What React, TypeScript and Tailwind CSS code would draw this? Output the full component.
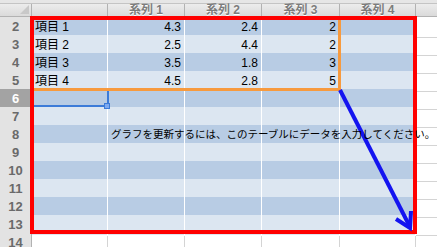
import React from "react";

const DARK = "bg-[#b8cce4]";
const LIGHT = "bg-[#dce6f1]";

type Row = { n: number; cells: string[] };

const rows: Row[] = [
  { n: 2, cells: ["項目 1", "4.3", "2.4", "2", ""] },
  { n: 3, cells: ["項目 2", "2.5", "4.4", "2", ""] },
  { n: 4, cells: ["項目 3", "3.5", "1.8", "3", ""] },
  { n: 5, cells: ["項目 4", "4.5", "2.8", "5", ""] },
  { n: 6, cells: ["", "", "", "", ""] },
  { n: 7, cells: ["", "", "", "", ""] },
  { n: 8, cells: ["", "", "", "", ""] },
  { n: 9, cells: ["", "", "", "", ""] },
  { n: 10, cells: ["", "", "", "", ""] },
  { n: 11, cells: ["", "", "", "", ""] },
  { n: 12, cells: ["", "", "", "", ""] },
  { n: 13, cells: ["", "", "", "", ""] },
];

const GRID = "grid grid-cols-[32px_76px_77px_77px_78px_76px_1fr]";
const FONT = "font-['Liberation_Sans','Noto_Sans_CJK_JP',sans-serif]";

function RowHead({ n, active }: { n: number; active?: boolean }) {
  return (
    <div
      className={`h-full flex items-center justify-center border-r border-b border-[#b2b2b2] text-[13px] font-bold ${
        active ? "bg-[#a3a3a3] text-white" : "bg-[#e3e3e3] text-[#6a6a6a]"
      }`}
    >
      {n}
    </div>
  );
}

export default function App() {
  return (
    <div className={`relative w-[437px] h-[247px] overflow-hidden bg-white ${FONT}`}>
      {/* toolbar edge above the header row */}
      <div className="h-[4px] bg-[#e6e6e6] border-b border-[#c4c4c4]" />

      {/* column header row */}
      <div className={`${GRID} h-[13px] bg-gradient-to-b from-[#ececec] to-[#d9d9d9]`}>
        <div className="relative border-r border-b border-[#b2b2b2]">
          <div className="absolute right-[2px] bottom-[2px] w-0 h-0 border-l-[9px] border-l-transparent border-b-[9px] border-b-[#c8c8c8]" />
        </div>
        <div className="border-r border-b border-[#b2b2b2]" />
        {["系列 1", "系列 2", "系列 3", "系列 4"].map((t) => (
          <div
            key={t}
            className="flex items-center justify-center border-r border-b border-[#b2b2b2] text-[12px] font-bold text-[#7c7c7c] leading-none [text-shadow:0_1px_0_#ffffff]"
          >
            {t}
          </div>
        ))}
        <div className="border-b border-[#b2b2b2]" />
      </div>

      {/* data rows */}
      {rows.map((r, i) => {
        const stripe = i % 2 === 0 ? DARK : LIGHT;
        return (
          <div key={r.n} className={`${GRID} h-[18px]`}>
            <RowHead n={r.n} active={r.n === 6} />
            {r.cells.map((c, j) => (
              <div
                key={j}
                className={`relative ${stripe} border-r border-b border-white flex items-center text-[12px] text-black ${
                  j === 0 ? "justify-start pl-[3px]" : "justify-end pr-[3px]"
                }`}
              >
                {c}
                {r.n === 8 && j === 1 && (
                  <span className="absolute left-[3px] top-[1px] z-10 whitespace-nowrap text-[10.5px] leading-[16px] text-black">
                    グラフを更新するには、このテーブルにデータを入力してください。
                  </span>
                )}
              </div>
            ))}
            <div className="border-b border-[#d4d4d4]" />
          </div>
        );
      })}

      {/* row 14, outside the table */}
      <div className={`${GRID} h-[18px]`}>
        <RowHead n={14} />
        {[0, 1, 2, 3, 4].map((k) => (
          <div key={k} className="border-r border-b border-[#d4d4d4]" />
        ))}
        <div />
      </div>

      {/* active cell A6 */}
      <div className="absolute left-[32px] top-[89px] w-[77px] h-[18px] border-r-2 border-b-2 border-[#3c7bd8]" />
      <div className="absolute left-[104px] top-[103px] w-[6px] h-[6px] bg-[#7eaaf0] border border-[#3c7bd8]" />

      {/* orange data range */}
      <div className="absolute left-[31px] top-[16px] w-[310px] h-[75px] border-[3px] border-[#f79a3e]" />

      {/* red table range */}
      <div className="absolute left-[30px] top-[16px] w-[387px] h-[218px] border-[4px] border-[#ff0000]" />

      {/* resize arrow */}
      <svg className="absolute left-0 top-0" width="437" height="247" viewBox="0 0 437 247">
        <line x1="340" y1="90" x2="409" y2="225" stroke="#1414f0" strokeWidth="4" />
        <polyline
          points="396,219 410,228 411,211"
          fill="none"
          stroke="#1414f0"
          strokeWidth="4"
          strokeLinejoin="miter"
        />
      </svg>
    </div>
  );
}
